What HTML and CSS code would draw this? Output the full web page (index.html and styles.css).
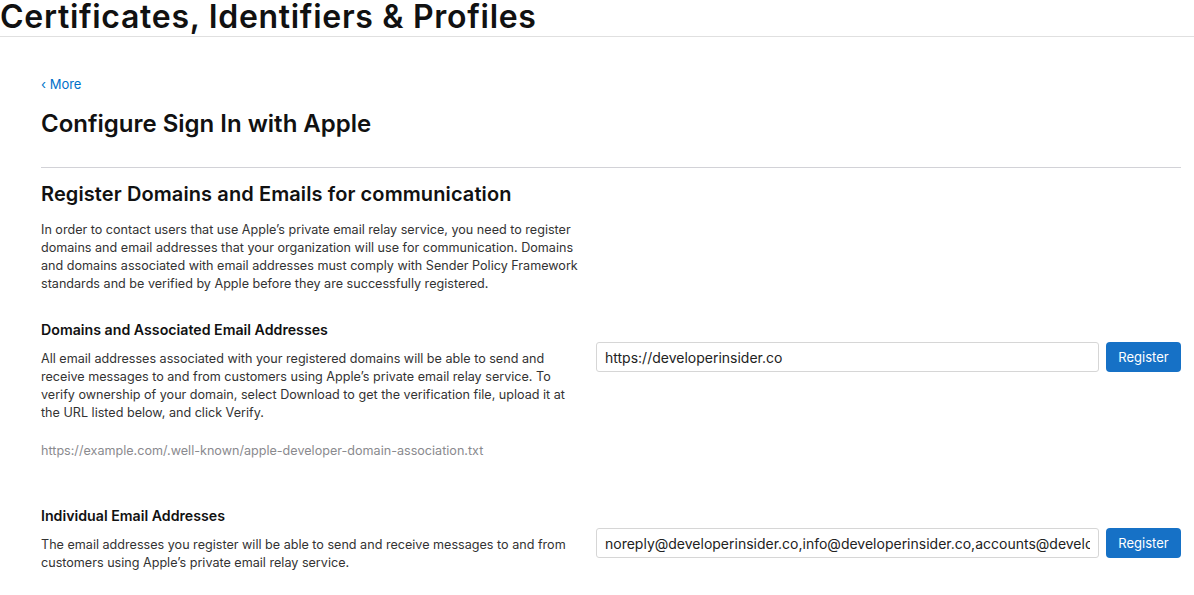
FILE: index.html
```html
<!DOCTYPE html>
<html>
<head>
<meta charset="utf-8">
<link rel="stylesheet" href="styles.css">
</head>
<body>
<header class="topbar">
  <div class="topbar-title">Certificates, Identifiers &amp; Profiles</div>
</header>
<main class="content">
  <a class="back" href="#">‹ More</a>
  <h1 class="page-title">Configure Sign In with Apple</h1>
  <hr class="divider">
  <h2 class="section-title">Register Domains and Emails for communication</h2>
  <p class="intro">In order to contact users that use Apple’s private email relay service, you need to register domains and email addresses that your organization will use for communication. Domains and domains associated with email addresses must comply with Sender Policy Framework standards and be verified by Apple before they are successfully registered.</p>

  <section class="row row-domains">
    <div class="row-text">
      <h3 class="row-title">Domains and Associated Email Addresses</h3>
      <p class="row-desc">All email addresses associated with your registered domains will be able to send and receive messages to and from customers using Apple’s private email relay service. To verify ownership of your domain, select Download to get the verification file, upload it at the URL listed below, and click Verify.</p>
      <p class="row-url">https://example.com/.well-known/apple-developer-domain-association.txt</p>
    </div>
    <div class="row-form">
      <input class="field" type="text" value="https://developerinsider.co">
      <button class="btn">Register</button>
    </div>
  </section>

  <section class="row row-emails">
    <div class="row-text">
      <h3 class="row-title">Individual Email Addresses</h3>
      <p class="row-desc">The email addresses you register will be able to send and receive messages to and from customers using Apple’s private email relay service.</p>
    </div>
    <div class="row-form">
      <input class="field" type="text" value="noreply@developerinsider.co,info@developerinsider.co,accounts@developerinsider.co">
      <button class="btn">Register</button>
    </div>
  </section>
</main>
</body>
</html>
```

FILE: styles.css
```css
* { box-sizing: border-box; }
html, body { margin: 0; padding: 0; background: #fff; }
body {
  font-family: Inter, "Noto Sans", "Liberation Sans", sans-serif;
  color: #1d1d1f;
  overflow: hidden;
  width: 1194px;
  height: 595px;
}
.topbar {
  height: 37px;
  border-bottom: 1px solid #e0e0e0;
}
.topbar-title {
  font-size: 32px;
  font-weight: 600;
  line-height: 34px;
  letter-spacing: 0.7px;
  color: #111;
}
.content {
  padding: 38px 13px 0 41px;
}
.back {
  display: block;
  color: #0070c9;
  text-decoration: none;
  font-size: 13px;
  line-height: 18px;
}
.page-title {
  margin: 17px 0 0;
  font-size: 24px;
  font-weight: 600;
  line-height: 28px;
  color: #111;
}
.divider {
  border: 0;
  border-top: 1px solid #d2d2d7;
  margin: 29px 0 0;
}
.section-title {
  margin: 14px 0 0;
  font-size: 20px;
  font-weight: 600;
  line-height: 24px;
  letter-spacing: 0.1px;
  color: #111;
}
.intro, .row-desc {
  font-size: 12.6px;
  line-height: 18px;
  color: #333;
  margin: 0;
}
.intro {
  margin-top: 15px;
  width: 550px;
}
.row {
  display: grid;
  grid-template-columns: 555px 1fr;
  margin-top: 28px;
}
.row-text { width: 538px; }
.row-emails { margin-top: 47px; }
.row-title {
  margin: 0;
  font-size: 14.2px;
  font-weight: 600;
  line-height: 18px;
  color: #111;
}
.row-desc { margin-top: 11px; }
.row-url {
  margin: 20px 0 0;
  font-size: 12.6px;
  line-height: 18px;
  color: #8a8a8e;
}
.row-form {
  display: flex;
  gap: 7px;
  align-items: flex-start;
  padding-top: 21px;
}
.row-emails .row-form { padding-top: 21px; }
.field {
  flex: 1;
  height: 30px;
  border: 1px solid #d6d6d6;
  border-radius: 3px;
  padding: 0 8px;
  font-family: Inter, "Noto Sans", sans-serif;
  font-size: 14px;
  color: #222;
  background: #fff;
  min-width: 0;
}
.btn {
  height: 30px;
  width: 75px;
  border: 0;
  border-radius: 4px;
  background: #1671c6;
  color: #fff;
  font-family: Inter, "Noto Sans", sans-serif;
  font-size: 13px;
  padding: 0;
}
```
